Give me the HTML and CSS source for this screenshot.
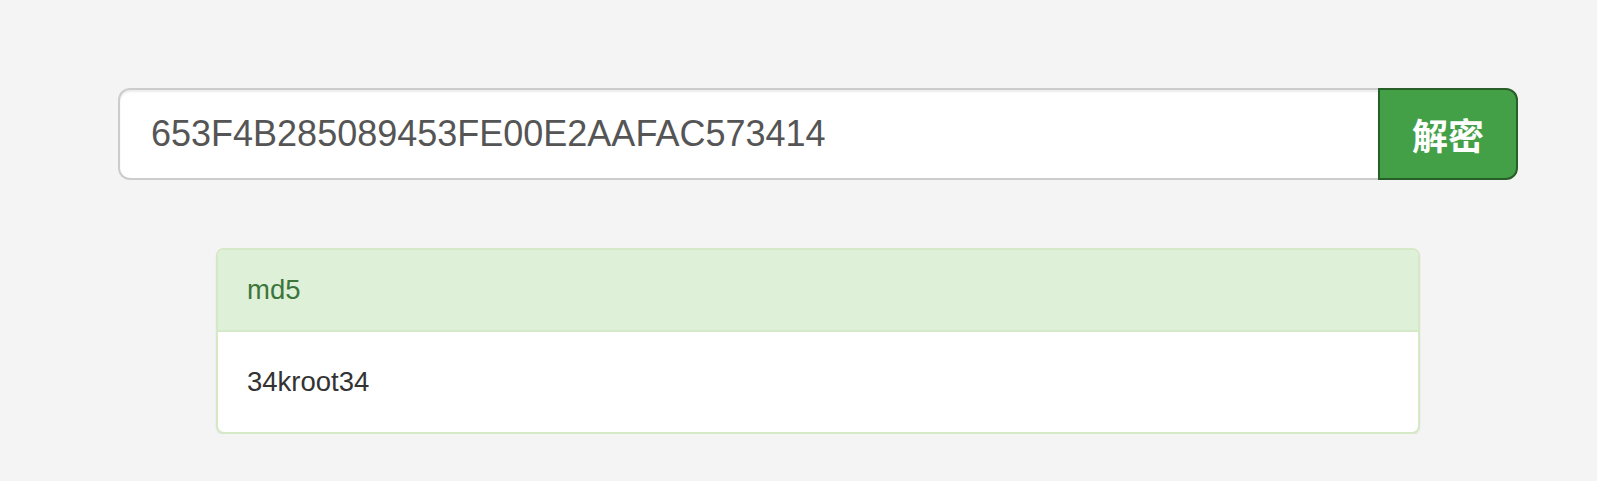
FILE: index.html
```html
<!DOCTYPE html>
<html lang="zh">
<head>
<meta charset="utf-8">
<title>MD5 解密</title>
<link rel="stylesheet" href="styles.css">
</head>
<body>
<div class="page">
  <form class="search">
    <input class="search-input" type="text" value="653F4B285089453FE00E2AAFAC573414">
    <button class="search-btn" type="button">解密</button>
  </form>
  <div class="panel">
    <div class="panel-heading">md5</div>
    <div class="panel-body">34kroot34</div>
  </div>
</div>
</body>
</html>
```
FILE: styles.css
```css
html, body {
  margin: 0;
  padding: 0;
  background: #f4f4f4;
}
body {
  font-family: "Liberation Sans", Arial, sans-serif;
  color: #333;
}
.page {
  display: flex;
  flex-direction: column;
  padding-top: 88px;
}
.search {
  display: flex;
  margin: 0 0 0 118px;
  width: 1400px;
  height: 92px;
}
.search-input {
  flex: 1;
  min-width: 0;
  box-sizing: border-box;
  height: 100%;
  margin: 0;
  border: 2px solid #cccccc;
  border-right: none;
  border-radius: 12px 0 0 12px;
  background: #ffffff;
  box-shadow: inset 0 2px 2px rgba(0,0,0,0.075);
  padding: 0 31px;
  font-family: "Liberation Sans", Arial, sans-serif;
  font-size: 36px;
  color: #555555;
  outline: none;
}
.search-btn {
  width: 140px;
  box-sizing: border-box;
  height: 100%;
  margin: 0;
  padding: 0;
  background: #43a047;
  border: 2px solid #285e28;
  border-radius: 0 12px 12px 0;
  color: #ffffff;
  font-family: "Noto Sans CJK SC", "Liberation Sans", sans-serif;
  font-weight: 700;
  font-size: 36px;
  line-height: 1;
  cursor: pointer;
}
.panel {
  margin: 68px 0 0 216px;
  width: 1204px;
  box-sizing: border-box;
  border: 2px solid #d6e9c6;
  border-radius: 8px;
  background: #ffffff;
  box-shadow: 0 1px 2px rgba(0,0,0,0.08);
  overflow: hidden;
}
.panel-heading {
  display: flex;
  align-items: center;
  height: 80px;
  padding: 0 29px;
  background: #dff0d8;
  border-bottom: 2px solid #d6e9c6;
  color: #3c763d;
  font-size: 27.5px;
}
.panel-body {
  display: flex;
  align-items: center;
  height: 100px;
  padding: 0 29px;
  font-size: 27.5px;
  color: #333333;
}
```
